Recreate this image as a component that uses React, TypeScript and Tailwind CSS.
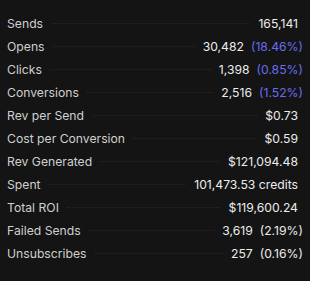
import React from "react";

type Row = { label: string; value: string; pct?: string; blue?: boolean };

const rows: Row[] = [
  { label: "Sends", value: "165,141" },
  { label: "Opens", value: "30,482", pct: "(18.46%)", blue: true },
  { label: "Clicks", value: "1,398", pct: "(0.85%)", blue: true },
  { label: "Conversions", value: "2,516", pct: "(1.52%)", blue: true },
  { label: "Rev per Send", value: "$0.73" },
  { label: "Cost per Conversion", value: "$0.59" },
  { label: "Rev Generated", value: "$121,094.48" },
  { label: "Spent", value: "101,473.53 credits" },
  { label: "Total ROI", value: "$119,600.24" },
  { label: "Failed Sends", value: "3,619", pct: "(2.19%)" },
  { label: "Unsubscribes", value: "257", pct: "(0.16%)" },
];

export default function App() {
  return (
    <div
      className="w-[310px] h-[281px] bg-[#141414] pt-[13px] pl-[7px] text-[12.2px]"
      style={{ fontFamily: "Inter, 'Noto Sans', sans-serif" }}
    >
      {rows.map((r) => (
        <div
          key={r.label}
          className={`flex items-center h-[23px] ${r.pct ? "pr-[7px]" : "pr-[12px]"}`}
        >
          <span className="text-[#d0d0d0] whitespace-nowrap">{r.label}</span>
          <div className="flex-1 mx-[8px] border-b border-dotted border-[#262626] -translate-y-[1px]" />
          <span className="text-[#ececec] whitespace-nowrap">{r.value}</span>
          {r.pct && (
            <span
              className={`ml-[7px] whitespace-nowrap ${r.blue ? "text-[#6a6cf2]" : "text-[#ececec]"}`}
            >
              {r.pct}
            </span>
          )}
        </div>
      ))}
    </div>
  );
}
